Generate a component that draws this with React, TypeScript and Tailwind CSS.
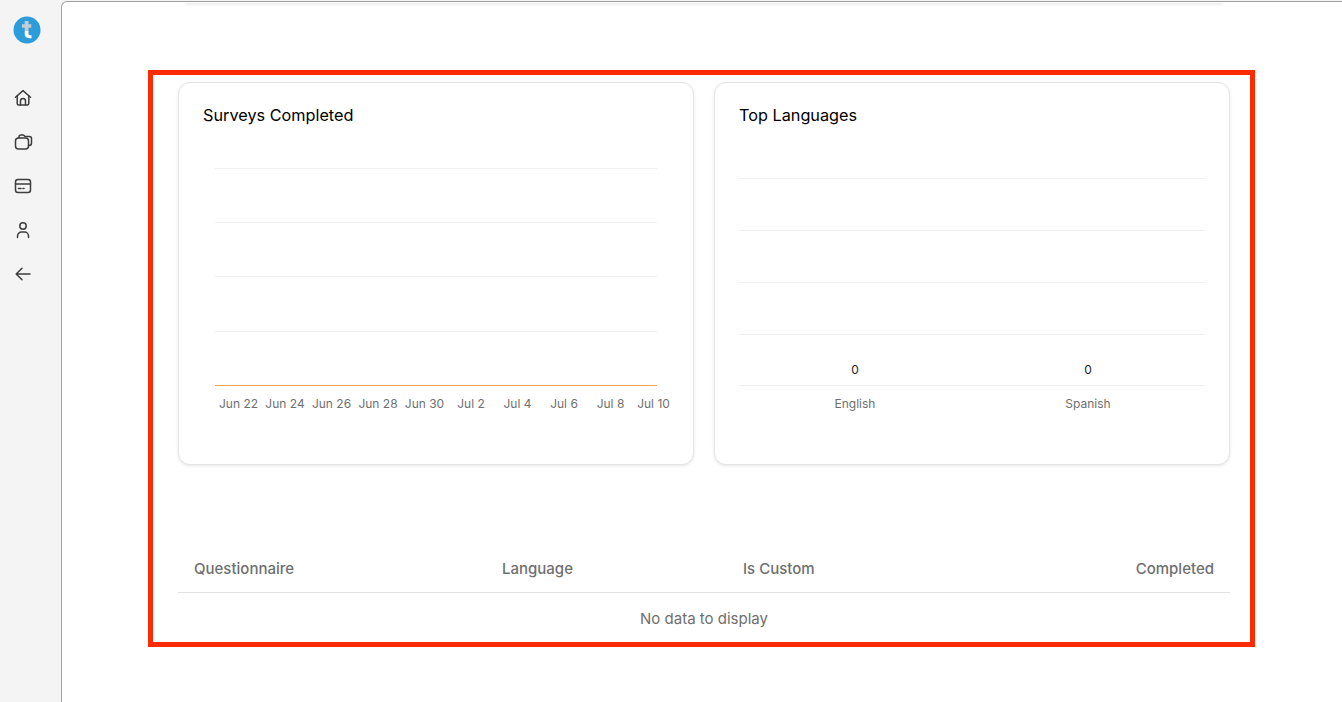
import React from 'react';

const font = "font-['Inter',sans-serif]";

function ChartCard({ title, children }: { title: string; children: React.ReactNode }) {
    return (
        <div className="h-[383px] flex-1 rounded-xl border border-[#e4e4e4] bg-white shadow-[0_1px_3px_rgba(0,0,0,0.1)]">
            <div className="pl-6 pt-[22px] text-[16.25px] leading-[20px] text-black">{title}</div>
            {children}
        </div>
    );
}

function Logo() {
    return (
        <svg width="28" height="28" viewBox="0 0 28 28">
            <circle cx="14" cy="14" r="13.5" fill="#2d9cdb" />
            <path d="M11.7 5h3.8v3.2h2.8v3.5h-2.8V15h-3.8v-3.3H9V8.2h2.7z" fill="#c5cdd3" />
            <path d="M11.7 15h3.8v3c0 .9.7 1.3 3 1.3v3c-4.6 0-6.8-1.4-6.8-4.3z" fill="#fff" />
        </svg>
    );
}

function NavIcon({ children }: { children: React.ReactNode }) {
    return (
        <div className="flex h-11 w-full items-center justify-center">
            <svg width="20" height="20" viewBox="0 0 20 20" fill="none" stroke="#3d3d3d" strokeWidth="1.5" strokeLinecap="round" strokeLinejoin="round">
                {children}
            </svg>
        </div>
    );
}

const weeks = ['Jun 22', 'Jun 24', 'Jun 26', 'Jun 28', 'Jun 30', 'Jul 2', 'Jul 4', 'Jul 6', 'Jul 8', 'Jul 10'];

export default function App() {
    return (
        <div className={`flex h-[702px] w-[1342px] overflow-hidden bg-[#f4f4f4] ${font}`}>
            <aside className="flex w-[61px] shrink-0 flex-col items-center pr-[15px]">
                <div className="pl-[7px] pt-4"><Logo /></div>
                <nav className="mt-[32px] flex w-full flex-col items-center">
                    <NavIcon>
                        <path d="M2.5 9.2 10 2.6l7.5 6.6" />
                        <path d="M4.2 8v7.5a1.5 1.5 0 0 0 1.5 1.5h8.6a1.5 1.5 0 0 0 1.5-1.5V8" />
                        <path d="M7.5 17v-4a2.5 2.5 0 0 1 5 0v4" />
                    </NavIcon>
                    <NavIcon>
                        <path d="M6 6V5a2 2 0 0 1 2-2h2.5L12 4.5h4.5a2 2 0 0 1 2 2V11a2.5 2.5 0 0 1-2.5 2.5h-.5" />
                        <rect x="2.5" y="6" width="13" height="11" rx="3" />
                    </NavIcon>
                    <NavIcon>
                        <rect x="2.5" y="3.5" width="15" height="13" rx="2.5" />
                        <path d="M2.5 8h15" />
                        <path d="M5.5 12.5h2.5M10 12.5h1" />
                    </NavIcon>
                    <NavIcon>
                        <circle cx="10" cy="6" r="3.2" />
                        <path d="M4.5 17.5v-1.5a4 4 0 0 1 4-4h3a4 4 0 0 1 4 4v1.5" />
                    </NavIcon>
                    <NavIcon>
                        <path d="M17 10H3.5M9 4.2 3.2 10 9 15.8" />
                    </NavIcon>
                </nav>
            </aside>
            <main className="relative mt-px flex-1 rounded-tl-md border-l border-t border-[#a3a3a3] bg-white pl-[86px] pt-[68px]">
                <div className="absolute left-[123px] right-[119px] top-0 h-px bg-white shadow-[0_1px_3px_rgba(0,0,0,0.2)]" />
                <div className="h-[577px] w-[1107px] border-[5px] border-[#ff2b00] pl-[25px] pr-[20px] pt-[7px]">
                    <div className="flex gap-5">
                        <ChartCard title="Surveys Completed">
                            <svg width="514" height="320" viewBox="0 0 514 320" className="block">
                                {[43, 97, 151, 206].map((y) => (
                                    <line key={y} x1="36" x2="478" y1={y + 0.5} y2={y + 0.5} stroke="#f0f0f0" />
                                ))}
                                <line x1="36" x2="478" y1="260.5" y2="260.5" stroke="#f4a65a" />
                                {weeks.map((w, i) => (
                                    <text key={w} x={59.5 + i * 46.5 - (i === 9 ? 3.5 : 0)} y="283" textAnchor="middle" fontSize="12" fill="#6f6f6f">{w}</text>
                                ))}
                            </svg>
                        </ChartCard>
                        <ChartCard title="Top Languages">
                            <svg width="514" height="320" viewBox="0 0 514 320" className="block">
                                {[53, 105, 157, 209, 260].map((y) => (
                                    <line key={y} x1="24" x2="490" y1={y + 0.5} y2={y + 0.5} stroke="#f0f0f0" />
                                ))}
                                <text x="140" y="249" textAnchor="middle" fontSize="12" fill="#222">0</text>
                                <text x="373" y="249" textAnchor="middle" fontSize="12" fill="#222">0</text>
                                <text x="140" y="283" textAnchor="middle" fontSize="12" fill="#6f6f6f">English</text>
                                <text x="373" y="283" textAnchor="middle" fontSize="12" fill="#6f6f6f">Spanish</text>
                            </svg>
                        </ChartCard>
                    </div>
                    <table className="mt-[76px] w-full table-fixed border-collapse">
                        <thead>
                            <tr className="h-[51px] border-b border-[#e2e2e2] text-[15px] font-medium text-[#6f6f6f]">
                                <th className="w-[324px] pl-4 pt-[5px] text-left font-medium">Questionnaire</th>
                                <th className="w-[241px] pt-[5px] text-left font-medium">Language</th>
                                <th className="pt-[5px] text-left font-medium">Is Custom</th>
                                <th className="pr-4 pt-[5px] text-right font-medium">Completed</th>
                            </tr>
                        </thead>
                        <tbody>
                            <tr>
                                <td colSpan={4} className="h-[53px] text-center text-[15px] text-[#6f6f6f]">No data to display</td>
                            </tr>
                        </tbody>
                    </table>
                </div>
            </main>
        </div>
    );
}
